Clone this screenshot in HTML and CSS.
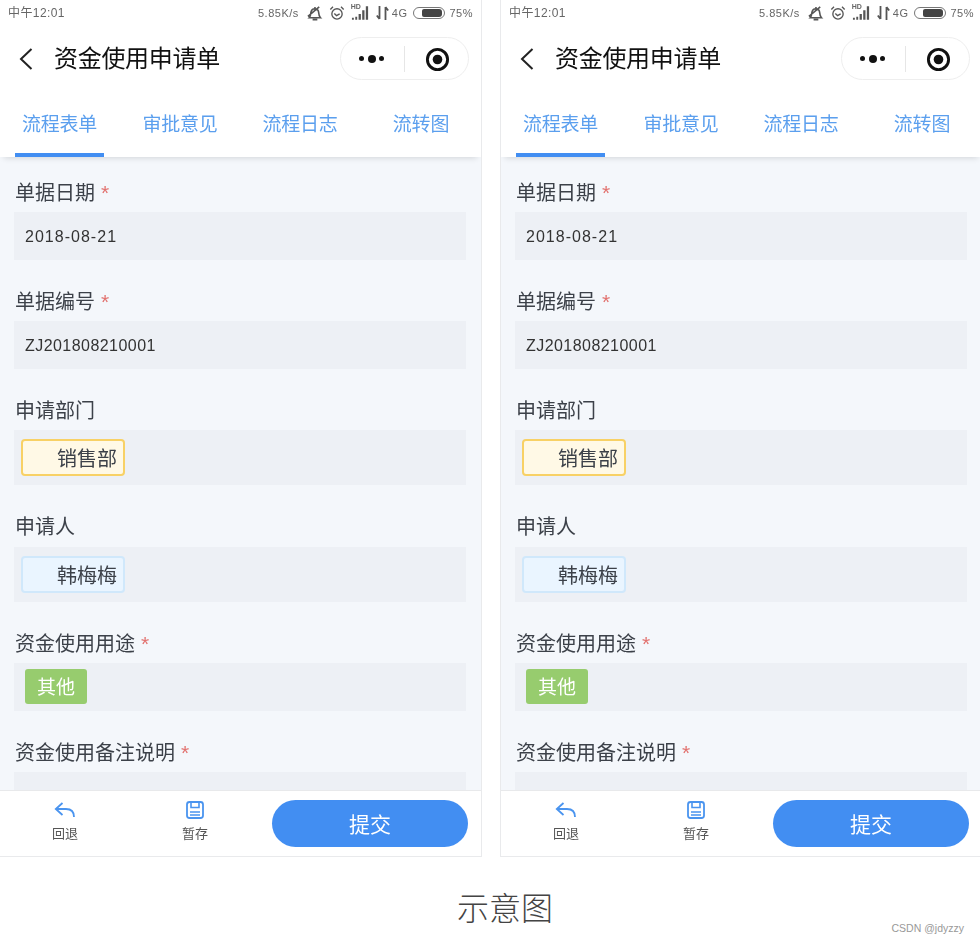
FILE: index.html
```html
<!DOCTYPE html>
<html lang="zh-CN">
<head>
<meta charset="utf-8">
<title>资金使用申请单</title>
<link rel="stylesheet" href="styles.css">
</head>
<body>
<svg class="sprite" aria-hidden="true">
  <symbol id="i-bell" viewBox="0 0 18 18"><path d="M3.500 13.500c1.200-1.200 1.300-2.600 1.500-4.500C5.300 6 7.300 4 9.500 4s3.800 1.800 4 4.500c.1 2 .4 3.600 1.800 5zM7 15.500h5M2 12 14 2M9.500 2v2" fill="none" stroke="#555" stroke-width="1.700"/></symbol>
  <symbol id="i-alarm" viewBox="0 0 18 18"><circle cx="9" cy="10" r="5.800" fill="none" stroke="#555" stroke-width="1.500"/><path d="M6 9.500 8.500 12l3.500-2M1.500 5 4.500 2M16.500 5l-3-3" fill="none" stroke="#555" stroke-width="1.500"/></symbol>
  <symbol id="i-signal" viewBox="0 0 20 16"><path d="M1 13h2v2H1zM4.500 12h2v3h-2zM8 9h2.400v6H8zM11.800 5h2.400v10h-2.400zM15.600 1h2.400v14h-2.400z" fill="#555"/></symbol>
  <symbol id="i-net" viewBox="0 0 13 16"><path d="M3.500 1v13M.8 10.500l2.700 3.500M9.500 15V2M9.500 2l2.700 3.500" fill="none" stroke="#555" stroke-width="1.800"/></symbol>
  <symbol id="i-target" viewBox="0 0 26 26"><circle cx="13" cy="13" r="10.500" fill="none" stroke="#111" stroke-width="3"/><circle cx="13" cy="13" r="5" fill="#111"/></symbol>
  <symbol id="i-back" viewBox="0 0 16 26"><path d="M13.500 3 3 13l10.500 10" fill="none" stroke="#222" stroke-width="2"/></symbol>
  <symbol id="i-undo" viewBox="0 0 22 18"><path d="M8.500 2 1.800 8l6.700 6M2 8h10c4.500 0 8 2 8 8" fill="none" stroke="#4a94ef" stroke-width="1.800"/></symbol>
  <symbol id="i-save" viewBox="0 0 20 20"><rect x="2" y="2" width="16" height="16" rx="2.500" fill="none" stroke="#4a94ef" stroke-width="1.800"/><path d="M6 2v5.500h8V2M5 12h10M5 15h10" fill="none" stroke="#4a94ef" stroke-width="1.600"/></symbol>
</svg>
<main class="sheet">
  <section class="phone phone-left">
    <header class="status">
      <span class="time"><span class="time-cn">中午</span>12:01</span>
      <span class="sys"><span>5.85K/s</span><svg class="ic-bell"><use href="#i-bell"/></svg><svg class="ic-alarm"><use href="#i-alarm"/></svg><span class="hd"><b>HD</b><svg class="ic-sig"><use href="#i-signal"/></svg></span><svg class="ic-net"><use href="#i-net"/></svg><span class="s-4g">4G</span><span class="batt"><i></i></span><span class="s-pct">75%</span></span>
    </header>
    <div class="nav">
      <svg class="back"><use href="#i-back"/></svg>
      <h1 class="title">资金使用申请单</h1>
      <div class="capsule"><span class="dots"><i></i><i class="big"></i><i></i></span><span class="cap-sep"></span><svg class="target"><use href="#i-target"/></svg></div>
    </div>
    <nav class="tabs">
      <a class="tab active">流程表单</a><a class="tab">审批意见</a><a class="tab">流程日志</a><a class="tab">流转图</a>
    </nav>
    <div class="form">
      <div class="field"><div class="label">单据日期<em>*</em></div><div class="box">2018-08-21</div></div>
      <div class="field"><div class="label">单据编号<em>*</em></div><div class="box box-code">ZJ201808210001</div></div>
      <div class="field"><div class="label">申请部门</div><div class="box box-tag"><span class="tag tag-yellow">销售部</span></div></div>
      <div class="field"><div class="label">申请人</div><div class="box box-tag"><span class="tag tag-blue">韩梅梅</span></div></div>
      <div class="field"><div class="label">资金使用用途<em>*</em></div><div class="box box-green"><span class="tag-green">其他</span></div></div>
      <div class="field"><div class="label">资金使用备注说明<em>*</em></div><div class="box"></div></div>
    </div>
    <footer class="actions">
      <div class="act"><svg class="act-ic"><use href="#i-undo"/></svg><span>回退</span></div>
      <div class="act"><svg class="act-ic"><use href="#i-save"/></svg><span>暂存</span></div>
      <button class="submit">提交</button>
    </footer>
  </section>
  <section class="phone phone-right">
    <header class="status">
      <span class="time"><span class="time-cn">中午</span>12:01</span>
      <span class="sys"><span>5.85K/s</span><svg class="ic-bell"><use href="#i-bell"/></svg><svg class="ic-alarm"><use href="#i-alarm"/></svg><span class="hd"><b>HD</b><svg class="ic-sig"><use href="#i-signal"/></svg></span><svg class="ic-net"><use href="#i-net"/></svg><span class="s-4g">4G</span><span class="batt"><i></i></span><span class="s-pct">75%</span></span>
    </header>
    <div class="nav">
      <svg class="back"><use href="#i-back"/></svg>
      <h1 class="title">资金使用申请单</h1>
      <div class="capsule"><span class="dots"><i></i><i class="big"></i><i></i></span><span class="cap-sep"></span><svg class="target"><use href="#i-target"/></svg></div>
    </div>
    <nav class="tabs">
      <a class="tab active">流程表单</a><a class="tab">审批意见</a><a class="tab">流程日志</a><a class="tab">流转图</a>
    </nav>
    <div class="form">
      <div class="field"><div class="label">单据日期<em>*</em></div><div class="box">2018-08-21</div></div>
      <div class="field"><div class="label">单据编号<em>*</em></div><div class="box box-code">ZJ201808210001</div></div>
      <div class="field"><div class="label">申请部门</div><div class="box box-tag"><span class="tag tag-yellow">销售部</span></div></div>
      <div class="field"><div class="label">申请人</div><div class="box box-tag"><span class="tag tag-blue">韩梅梅</span></div></div>
      <div class="field"><div class="label">资金使用用途<em>*</em></div><div class="box box-green"><span class="tag-green">其他</span></div></div>
      <div class="field"><div class="label">资金使用备注说明<em>*</em></div><div class="box"></div></div>
    </div>
    <footer class="actions">
      <div class="act"><svg class="act-ic"><use href="#i-undo"/></svg><span>回退</span></div>
      <div class="act"><svg class="act-ic"><use href="#i-save"/></svg><span>暂存</span></div>
      <button class="submit">提交</button>
    </footer>
  </section>
</main>
<div class="caption-row">
  <div class="caption">示意图</div>
  <div class="mark">CSDN @jdyzzy</div>
</div>
</body>
</html>
```
FILE: styles.css
```css
* { box-sizing: border-box; }
html, body { margin: 0; padding: 0; background: #fff; }
body {
  width: 980px;
  height: 944px;
  overflow: hidden;
  font-family: "Noto Sans CJK SC", "Liberation Sans", sans-serif;
  color: #333;
}
.sprite { display: none; }
.sheet {
  display: grid;
  grid-template-columns: 482px 480px;
  column-gap: 18px;
  height: 857px;
}
.phone {
  display: flex;
  flex-direction: column;
  height: 857px;
  background: #f4f7fb;
  border-bottom: 1px solid #e9eaec;
  overflow: hidden;
  filter: blur(.4px);
}
.phone > * { width: 481px; }
.phone-left { border-right: 1px solid #e9eaec; }
.phone-right { border-left: 1px solid #e9eaec; }

.status {
  flex: none;
  height: 26px;
  background: #fff;
  display: flex;
  align-items: center;
  justify-content: space-between;
  padding: 0 8px;
  font: 11px/14px "Liberation Sans", sans-serif;
  color: #666;
  letter-spacing: .5px;
}
.time { font-size: 12px; letter-spacing: .4px; margin-bottom: 2px; }
.time-cn { font-family: "Noto Sans CJK SC", sans-serif; }
.sys { display: flex; align-items: center; }
.ic-bell { width: 17px; height: 17px; margin-left: 7px; }
.ic-alarm { width: 16px; height: 16px; margin-left: 6px; }
.hd { position: relative; display: block; width: 19px; height: 16px; margin-left: 6px; }
.hd b { position: absolute; left: 0; top: -2px; font-size: 7px; line-height: 8px; font-weight: 700; letter-spacing: 0; }
.ic-sig { display: block; width: 19px; height: 16px; }
.ic-net { width: 13px; height: 16px; margin-left: 6px; }
.s-4g { margin-left: 3px; }
.batt {
  display: block;
  width: 32px;
  height: 12px;
  margin-left: 6px;
  border: 1px solid #777;
  border-radius: 6px;
  padding: 1px 2px 1px 8px;
}
.batt i { display: block; height: 8px; background: #444; border-radius: 2px 3px 3px 2px; }
.s-pct { margin-left: 4px; }

.nav {
  flex: none;
  height: 70px;
  background: #fff;
  display: flex;
  align-items: center;
  padding: 0 12px 5px 18px;
}
.back { width: 16px; height: 26px; flex: none; }
.title {
  margin: 0 0 3px 20px;
  font-size: 24px;
  font-weight: 400;
  line-height: 32px;
  letter-spacing: -.3px;
  color: #111;
  flex: 1;
}
.capsule {
  width: 129px;
  height: 43px;
  border: 1px solid #eeeeee;
  border-radius: 22px;
  display: flex;
  align-items: center;
  padding-left: 18px;
}
.dots { display: flex; align-items: center; gap: 3.500px; width: 26px; }
.dots i { width: 5px; height: 5px; border-radius: 50%; background: #111; flex: none; }
.dots i.big { width: 8px; height: 8px; }
.cap-sep { width: 1px; height: 26px; background: #e6e6e6; margin-left: 19px; }
.target { width: 25px; height: 25px; margin: 1px 0 0 20px; }

.tabs {
  flex: none;
  height: 61px;
  background: #fff;
  display: grid;
  grid-template-columns: 119px 122px 118px 124px;
  padding-top: 13px;
  box-shadow: 0 5px 6px -4px rgba(0, 0, 0, .14);
  z-index: 1;
}
.tab {
  justify-self: center;
  width: 89px;
  height: 48px;
  font-size: 19px;
  line-height: 28px;
  letter-spacing: -.2px;
  color: #5b9fee;
  text-align: center;
  white-space: nowrap;
}
.active { border-bottom: 4px solid #428ef2; }

.form {
  flex: 1;
  min-height: 0;
  overflow: hidden;
  padding: 20.800px 15px 0 14px;
}
.field { margin-bottom: 27px; }
.label {
  display: flex;
  height: 28px;
  font-size: 20px;
  line-height: 27px;
  color: #3c4149;
  padding-left: 1px;
  margin-bottom: 6.500px;
}
.label em {
  font: 21px/28px "Liberation Sans", sans-serif;
  font-style: normal;
  color: #e2726f;
  margin-left: 6px;
  padding-top: 1px;
}
.box {
  background: #edf0f5;
  min-height: 47.5px;
  padding: 2px 11px 0;
  display: flex;
  align-items: center;
  font: 16px/22px "Liberation Sans", sans-serif;
  letter-spacing: 1.02px;
  color: #333;
}
.box-code { letter-spacing: .45px; }
.box-tag { min-height: 55px; padding: 0 7px; margin-top: .3px; }
.box-green { align-items: flex-start; padding-top: 6px; }
.tag {
  display: block;
  width: 104px;
  height: 37px;
  border-radius: 4px;
  padding-left: 34px;
  font: 20px/34px "Noto Sans CJK SC", sans-serif;
  letter-spacing: 0;
  color: #3c4149;
}
.tag-yellow { background: #fff9e6; border: 2px solid #f8d165; }
.tag-blue { background: #eaf5ff; border: 2px solid #d0e8fb; }
.tag-green {
  display: block;
  width: 62px;
  height: 35px;
  background: #97cc6e;
  border-radius: 3px;
  color: #fff;
  text-align: center;
  font: 19px/34px "Noto Sans CJK SC", sans-serif;
  letter-spacing: 0;
}

.actions {
  flex: none;
  height: 66px;
  background: #fff;
  border-top: 1px solid #e8e9eb;
  display: flex;
  align-items: flex-start;
}
.act {
  display: flex;
  flex-direction: column;
  align-items: center;
  width: 130px;
  padding-top: 9px;
  font-size: 13px;
  line-height: 18px;
  color: #555;
}
.act-ic { width: 22px; height: 20px; margin-bottom: 4px; }
.submit {
  width: 196px;
  height: 47px;
  margin: 9px 0 0 12px;
  border: 0;
  border-radius: 24px;
  background: #428ef2;
  color: #fff;
  font: 21px/47px "Noto Sans CJK SC", sans-serif;
  padding: 0;
}

.caption-row {
  display: flex;
  flex-direction: column;
  padding-top: 27px;
}
.caption {
  font-size: 32px;
  line-height: 44px;
  color: #444;
  text-align: center;
  padding-left: 30px;
  font-weight: 300;
}
.mark {
  align-self: flex-end;
  margin: -7px 16px 0 0;
  font: 10.500px/14px "Liberation Sans", sans-serif;
  color: #999;
}
```
